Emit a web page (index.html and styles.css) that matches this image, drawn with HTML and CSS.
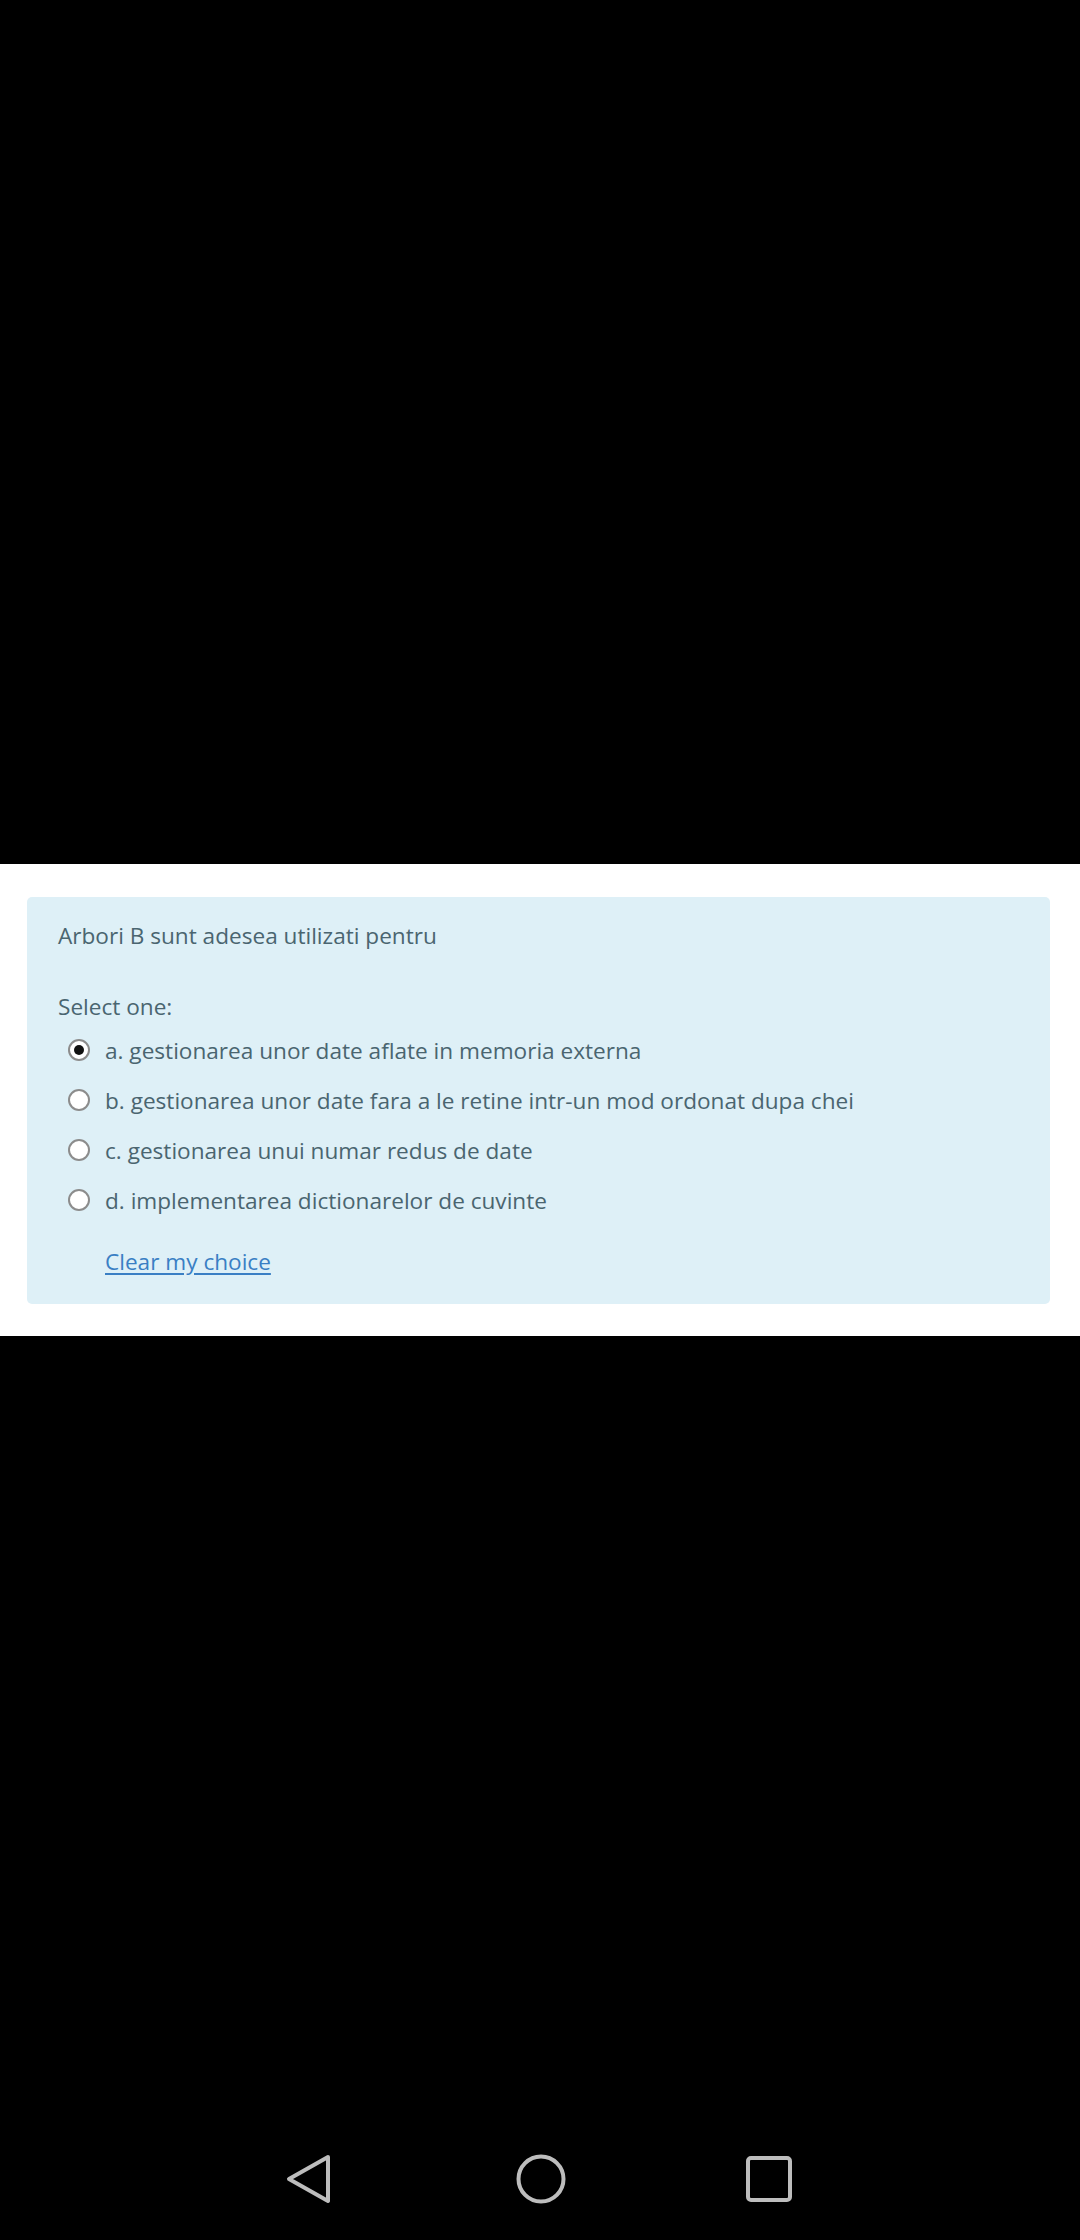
FILE: index.html
```html
<!DOCTYPE html>
<html>
<head>
<meta charset="utf-8">
<link rel="stylesheet" href="styles.css">
</head>
<body>
<div class="screen">
  <div class="top-black"></div>
  <div class="band">
    <div class="card">
      <div class="qtext">Arbori B sunt adesea utilizati pentru</div>
      <div class="prompt">Select one:</div>
      <div class="answers">
        <div class="opt"><span class="radio checked"></span><span class="label">a. gestionarea unor date aflate in memoria externa</span></div>
        <div class="opt"><span class="radio"></span><span class="label">b. gestionarea unor date fara a le retine intr-un mod ordonat dupa chei</span></div>
        <div class="opt"><span class="radio"></span><span class="label">c. gestionarea unui numar redus de date</span></div>
        <div class="opt"><span class="radio"></span><span class="label">d. implementarea dictionarelor de cuvinte</span></div>
      </div>
      <div class="clear"><a href="#">Clear my choice</a></div>
    </div>
  </div>
  <div class="bottom-black">
    <div class="navbar">
      <svg class="nav-back" width="46" height="52" viewBox="0 0 46 52"><path d="M43 4 L4 26 L43 48 Z" fill="none" stroke="#bdbdbd" stroke-width="4" stroke-linejoin="round"/></svg>
      <svg class="nav-home" width="52" height="52" viewBox="0 0 52 52"><circle cx="26" cy="26" r="22.5" fill="none" stroke="#bdbdbd" stroke-width="4"/></svg>
      <svg class="nav-recent" width="50" height="52" viewBox="0 0 50 52"><rect x="4" y="5" width="42" height="42" rx="3" fill="none" stroke="#bdbdbd" stroke-width="4"/></svg>
    </div>
  </div>
</div>
</body>
</html>
```
FILE: styles.css
```css
html, body {
  margin: 0;
  padding: 0;
  background: #000;
}
.screen {
  width: 1080px;
  height: 2240px;
  display: flex;
  flex-direction: column;
  font-family: "Open Sans", "Noto Sans", sans-serif;
}
.top-black {
  height: 864px;
  background: #000;
}
.band {
  background: #fff;
  padding: 33px 30px 32px 27px;
}
.card {
  background: #def0f7;
  border-radius: 5px;
  padding: 24px 30px 27px 31px;
  color: #4a6570;
  font-size: 22.6px;
}
.qtext {
  line-height: 30px;
}
.prompt {
  line-height: 30px;
  margin-top: 41px;
}
.answers {
  margin-top: 4px;
}
.opt {
  display: flex;
  align-items: center;
  height: 50px;
}
.radio {
  box-sizing: border-box;
  width: 22px;
  height: 22px;
  border-radius: 50%;
  border: 2px solid #8c8c8c;
  background: #fff;
  margin-left: 10px;
  margin-right: 15px;
  margin-top: -2px;
  position: relative;
  flex: none;
}
.radio.checked::after {
  content: "";
  position: absolute;
  left: 4px;
  top: 4px;
  width: 10px;
  height: 10px;
  border-radius: 50%;
  background: #111;
}
.label {
  line-height: 30px;
}
.clear {
  line-height: 30px;
  margin-top: 21px;
  padding-left: 47px;
}
.clear a {
  color: #3a7fc4;
  text-decoration: underline;
  text-underline-offset: 3px;
}
.bottom-black {
  flex: 1;
  background: #000;
  display: flex;
  flex-direction: column;
  justify-content: flex-end;
}
.navbar {
  height: 87px;
  display: flex;
  align-items: flex-start;
}
.nav-back {
  margin-left: 285px;
}
.nav-home {
  margin-left: 184px;
}
.nav-recent {
  margin-left: 177px;
}
```
